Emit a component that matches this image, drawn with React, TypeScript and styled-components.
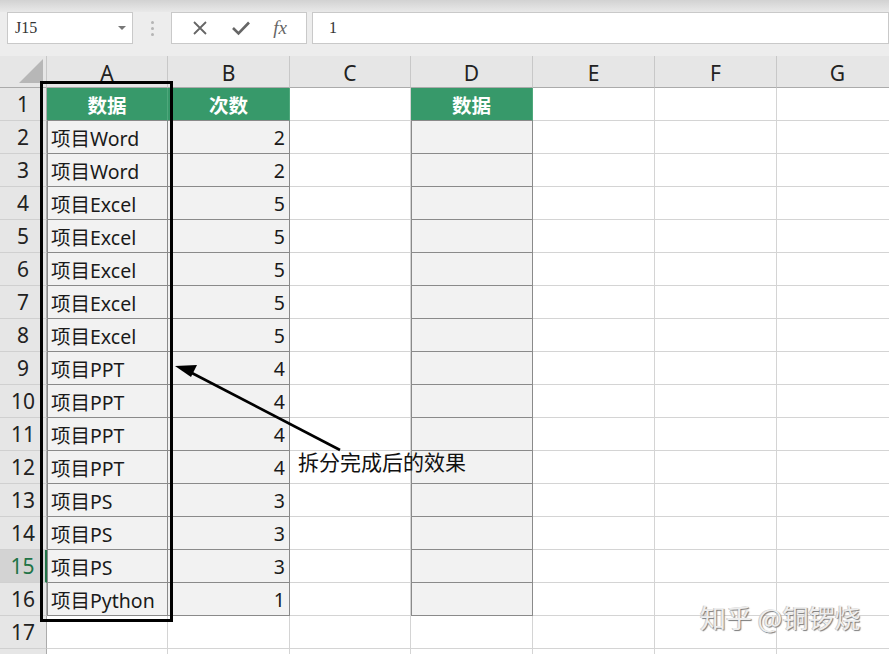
import styled, { createGlobalStyle } from "styled-components";

const GlobalStyle = createGlobalStyle`
  html, body { margin: 0; padding: 0; background: #ffffff; overflow: hidden; }
  * { box-sizing: border-box; }
`;

const FONT = `"Noto Sans", "Noto Sans CJK SC", sans-serif`;
const COL_WIDTHS = [47, 121, 122, 121, 122, 122, 122, 122];
const COLS = ["A", "B", "C", "D", "E", "F", "G"];

const rows: { label: string; count: number }[] = [
  { label: "项目Word", count: 2 },
  { label: "项目Word", count: 2 },
  { label: "项目Excel", count: 5 },
  { label: "项目Excel", count: 5 },
  { label: "项目Excel", count: 5 },
  { label: "项目Excel", count: 5 },
  { label: "项目Excel", count: 5 },
  { label: "项目PPT", count: 4 },
  { label: "项目PPT", count: 4 },
  { label: "项目PPT", count: 4 },
  { label: "项目PPT", count: 4 },
  { label: "项目PS", count: 3 },
  { label: "项目PS", count: 3 },
  { label: "项目PS", count: 3 },
  { label: "项目Python", count: 1 },
];

const Page = styled.div`
  position: relative;
  width: 889px;
  height: 654px;
  overflow: hidden;
  background: #ebebeb;
  font-family: ${FONT};
`;

const TopStrip = styled.div`
  height: 12px;
  background: linear-gradient(#d2d2d2, #e9e9e9);
`;

const Toolbar = styled.div`
  display: flex;
  align-items: stretch;
  height: 44px;
  padding: 0 0 12px 7px;
  background: #ededed;
`;

const Box = styled.div<{ $width?: number }>`
  display: flex;
  align-items: center;
  ${(p) => (p.$width ? `width: ${p.$width}px;` : "flex: 1;")}
  background: #ffffff;
  border: 1px solid #c9c9c9;
  font-family: "Liberation Serif", "Noto Sans CJK SC", serif;
  font-size: 16px;
  color: #333;
`;

const NameText = styled.span`
  flex: 1;
  padding-left: 7px;
`;

const DropArrow = styled.span`
  width: 0;
  height: 0;
  margin-right: 6px;
  border-left: 4px solid transparent;
  border-right: 4px solid transparent;
  border-top: 4px solid #777;
`;

const Dots = styled.div`
  width: 38px;
  display: flex;
  flex-direction: column;
  align-items: center;
  justify-content: center;
  gap: 3px;
  & > span {
    width: 3px;
    height: 3px;
    border-radius: 50%;
    background: #b5b5b5;
  }
`;

const Buttons = styled(Box)`
  justify-content: space-around;
  padding: 0 8px;
  margin-right: 5px;
`;

const Fx = styled.span`
  font-family: "Liberation Serif", serif;
  font-style: italic;
  font-size: 19px;
  color: #666;
`;

const FormulaText = styled.span`
  padding-left: 16px;
`;

const Grid = styled.div`
  display: grid;
  grid-template-columns: ${COL_WIDTHS.map((w) => `${w}px`).join(" ")};
  grid-template-rows: 32px;
  grid-auto-rows: 33px;
  width: 899px;
  background: #ffffff;
`;

const Corner = styled.div`
  background: #e6e6e6;
  border-right: 1px solid #c8c8c8;
  border-bottom: 1px solid #ababab;
  display: flex;
  align-items: flex-end;
  justify-content: flex-end;
  padding: 0 3px 4px 0;
  &::after {
    content: "";
    width: 0;
    height: 0;
    border-left: 24px solid transparent;
    border-bottom: 24px solid #b7b7b7;
  }
`;

const ColHead = styled.div`
  background: #e6e6e6;
  border-right: 1px solid #c8c8c8;
  border-bottom: 1px solid #ababab;
  display: flex;
  align-items: center;
  justify-content: center;
  font-size: 21px;
  color: #222;
  padding-top: 2px;
`;

const RowHead = styled.div<{ $active?: boolean }>`
  background: ${(p) => (p.$active ? "#d3d3d3" : "#e6e6e6")};
  color: ${(p) => (p.$active ? "#217346" : "#222")};
  border-bottom: 1px solid #d0d0d0;
  border-right: ${(p) => (p.$active ? "2px solid #217346" : "1px solid #ababab")};
  display: flex;
  align-items: center;
  justify-content: center;
  font-size: 21px;
`;

type Kind = "plain" | "data" | "head";

const Cell = styled.div<{ $kind: Kind; $align?: "left" | "right" | "center"; $edge?: boolean }>`
  display: flex;
  align-items: center;
  justify-content: ${(p) =>
    p.$align === "right" ? "flex-end" : p.$align === "center" ? "center" : "flex-start"};
  padding: 0 4px;
  font-size: 19.5px;
  white-space: nowrap;
  color: #1a1a1a;
  border-right: 1px solid #d4d4d4;
  border-bottom: 1px solid #d4d4d4;
  ${(p) =>
    p.$kind === "data" &&
    `
    background: #f2f2f2;
    border-right-color: #8a8a8a;
    border-bottom-color: #8a8a8a;
    ${p.$edge ? "box-shadow: inset 1px 0 0 #8a8a8a;" : ""}
  `}
  ${(p) =>
    p.$kind === "head" &&
    `
    background: #37996a;
    color: #ffffff;
    font-weight: 700;
    border-right-color: #4fa87c;
    border-bottom-color: #8a8a8a;
  `}
`;

const Overlay = styled.svg`
  position: absolute;
  left: 0;
  top: 0;
  pointer-events: none;
`;

const Frame = styled.div`
  position: absolute;
  left: 40px;
  top: 81px;
  width: 133px;
  height: 541px;
  border: 3px solid #000;
  pointer-events: none;
`;

const Note = styled.div`
  position: absolute;
  left: 298px;
  top: 450px;
  font-family: "Noto Sans CJK SC", sans-serif;
  font-size: 21px;
  line-height: 1.1;
  color: #111;
`;

const Watermark = styled.div`
  position: absolute;
  left: 700px;
  top: 601px;
  font-family: "Noto Sans CJK SC", sans-serif;
  font-size: 26px;
  line-height: 1.2;
  color: #eeeeee;
  text-shadow: 1px 1px 1px #7a7a7a, -1px 0 0 #cccccc;
  white-space: nowrap;
`;

const cellFor = (r: number, c: number) => {
  // r: 1-based row number, c: 0-based column index (0 = A)
  if (r === 1) {
    if (c === 0) return <Cell key={c} $kind="head" $align="center">数据</Cell>;
    if (c === 1) return <Cell key={c} $kind="head" $align="center">次数</Cell>;
    if (c === 3) return <Cell key={c} $kind="head" $align="center">数据</Cell>;
    return <Cell key={c} $kind="plain" />;
  }
  const item = rows[r - 2];
  if (item) {
    if (c === 0) return <Cell key={c} $kind="data" $edge>{item.label}</Cell>;
    if (c === 1) return <Cell key={c} $kind="data" $align="right">{item.count}</Cell>;
    if (c === 3) return <Cell key={c} $kind="data" $edge />;
  }
  return <Cell key={c} $kind="plain" />;
};

export default function App() {
  // row 18 only peeks in at the bottom edge, so its number is left out
  const rowNums = Array.from({ length: 18 }, (_, i) => i + 1);
  return (
    <Page>
      <GlobalStyle />
      <TopStrip />
      <Toolbar>
        <Box $width={126}>
          <NameText>J15</NameText>
          <DropArrow />
        </Box>
        <Dots>
          <span />
          <span />
          <span />
        </Dots>
        <Buttons $width={136}>
          <svg width="18" height="18" viewBox="0 0 18 18">
            <path d="M3 3 L15 15 M15 3 L3 15" stroke="#666" strokeWidth="1.8" fill="none" />
          </svg>
          <svg width="20" height="18" viewBox="0 0 20 18">
            <path d="M2 9 L7.5 14.5 L18 3.5" stroke="#666" strokeWidth="2.6" fill="none" />
          </svg>
          <Fx>fx</Fx>
        </Buttons>
        <Box>
          <FormulaText>1</FormulaText>
        </Box>
      </Toolbar>
      <Grid>
        <Corner />
        {COLS.map((c) => (
          <ColHead key={c}>{c}</ColHead>
        ))}
        {rowNums.map((r) => [
          <RowHead key={`h${r}`} $active={r === 15}>{r < 18 ? r : ""}</RowHead>,
          ...COLS.map((_, c) => cellFor(r, c)),
        ])}
      </Grid>
      <Frame />
      <Overlay width="889" height="654" viewBox="0 0 889 654">
        <line x1="340" y1="450" x2="190" y2="372" stroke="#000" strokeWidth="2.6" />
        <polygon points="175,366 197,365 191,377" fill="#000" />
      </Overlay>
      <Note>拆分完成后的效果</Note>
      <Watermark>知乎 @铜锣烧</Watermark>
    </Page>
  );
}
